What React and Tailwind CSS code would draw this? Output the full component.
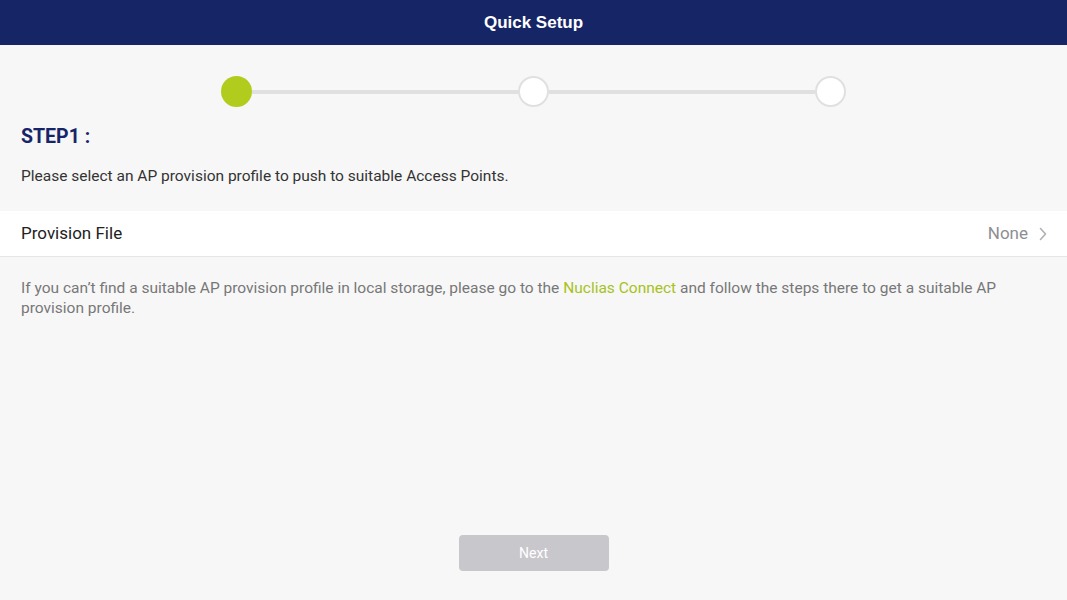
import React from 'react';

const Step = ({ active }) => (
    <div
        className={
            active
                ? 'w-[31px] h-[31px] rounded-full bg-[#b2cc1e] shrink-0'
                : 'w-[31px] h-[31px] rounded-full bg-white border-2 border-[#e0e0e0] shrink-0'
        }
    />
);

const App = () => {
    return (
        <div className="min-h-[600px] h-[600px] bg-[#f7f7f7] flex flex-col font-['Roboto',Arial,sans-serif]">
            <header className="h-[45px] bg-[#162566] flex items-center justify-center shrink-0">
                <h1 className="text-[17px] font-bold text-white font-['Liberation_Sans',Arial,sans-serif]">Quick Setup</h1>
            </header>

            <div className="flex items-center justify-center pt-[31px] pl-[221px] pr-[221px]">
                <Step active />
                <div className="flex-1 h-[4px] bg-[#e0e0e0]" />
                <Step />
                <div className="flex-1 h-[4px] bg-[#e0e0e0]" />
                <Step />
            </div>

            <div className="px-[21px]">
                <h2 className="mt-[18px] text-[19.5px] leading-[24px] font-bold text-[#16256a]">STEP1 :</h2>
                <p className="mt-[17px] text-[15.5px] leading-[20px] text-[#333333]">
                    Please select an AP provision profile to push to suitable Access Points.
                </p>
            </div>

            <button
                type="button"
                className="mt-[25px] h-[46px] bg-white border-b border-[#e6e6e6] flex items-center justify-between pl-[21px] pr-[20px] text-left"
            >
                <span className="text-[17px] text-[#222222]">Provision File</span>
                <span className="flex items-center gap-[11px] text-[17px] text-[#8e8e93]">
                    None
                    <svg width="8" height="14" viewBox="0 0 8 14" fill="none">
                        <path d="M1.5 1.5 L6.5 7 L1.5 12.5" stroke="#b0b0b5" strokeWidth="1.6" strokeLinecap="round" strokeLinejoin="round" />
                    </svg>
                </span>
            </button>

            <p className="px-[21px] mt-[21px] text-[15.5px] leading-[20px] text-[#777777]">
                If you can’t find a suitable AP provision profile in local storage, please go to the{' '}
                <span className="text-[#a6c21c]">Nuclias Connect</span> and follow the steps there to get a suitable AP provision profile.
            </p>

            <div className="flex-1" />

            <div className="flex justify-center pb-[29px]">
                <button
                    type="button"
                    className="w-[150px] h-[36px] rounded-[4px] bg-[#c8c7cc] text-white text-[14px]"
                >
                    Next
                </button>
            </div>
        </div>
    );
};

export default App;
